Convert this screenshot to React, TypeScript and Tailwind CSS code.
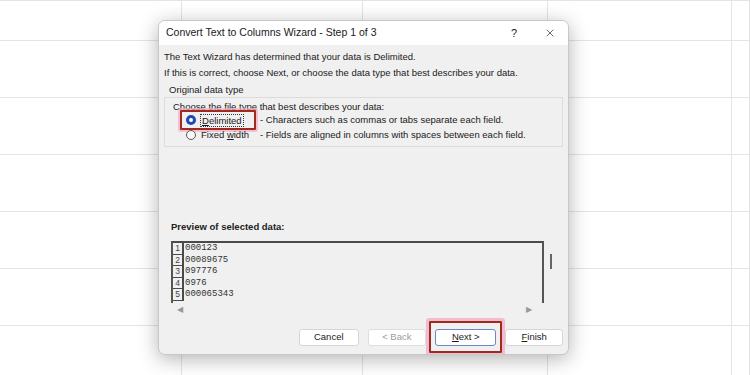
import { X } from "lucide-react";

const rows = ["000123", "00089675", "097776", "0976", "000065343"];

function GridBackground() {
  const cells = [];
  for (let r = 0; r < 7; r++) {
    for (let c = 0; c < 5; c++) {
      cells.push(<div key={`${r}-${c}`} className="border-r border-b border-[#e4e4e4]" />);
    }
  }
  return (
    <div className="grid h-full w-full grid-cols-[182px_181px_185px_184px_18px] grid-rows-[40px_57px_57px_57px_57px_57px_50px] border-t border-[#e4e4e4]">
      {cells}
    </div>
  );
}

function Radio({ checked }: { checked?: boolean }) {
  return checked ? (
    <span className="flex h-[10px] w-[10px] items-center justify-center rounded-full bg-[#1f4bb0]">
      <span className="h-[4px] w-[4px] rounded-full bg-white" />
    </span>
  ) : (
    <span className="h-[10px] w-[10px] rounded-full border border-[#5a5a5a] bg-[#f7f7f7]" />
  );
}

function Btn({ children, className = "" }: { children: React.ReactNode; className?: string }) {
  return (
    <div
      className={`flex h-[17px] items-center justify-center rounded-[3px] border bg-white text-[9.5px] ${className}`}
    >
      {children}
    </div>
  );
}

export default function App() {
  return (
    <div
      className="relative h-[375px] w-[750px] overflow-hidden bg-white text-[#1a1a1a]"
      style={{ fontFamily: '"Liberation Sans", Arial, sans-serif' }}
    >
      <GridBackground />

      {/* Wizard dialog */}
      <div className="absolute left-[158px] top-[20px] flex h-[335px] w-[411px] flex-col overflow-hidden rounded-[7px] border border-[#c8c8c8] bg-[#f0f0f0] shadow-[0_4px_20px_rgba(0,0,0,0.3)]">
        <div className="flex h-[24px] shrink-0 items-center bg-white pl-[7px] pr-[12px] text-[10.5px]">
          <span className="flex-1">Convert Text to Columns Wizard - Step 1 of 3</span>
          <span className="mr-[27px] text-[11px]">?</span>
          <X size={12} strokeWidth={1.3} />
        </div>

        <div className="flex flex-1 flex-col px-[5px] text-[9.5px]">
          <p className="mt-[6px] leading-[12px]">The Text Wizard has determined that your data is Delimited.</p>
          <p className="mt-[4px] leading-[12px]">
            If this is correct, choose Next, or choose the data type that best describes your data.
          </p>
          <p className="mt-[5px] pl-[5px] leading-[12px]">Original data type</p>

          <div className="mt-[1px] h-[50px] border border-[#dcdcdc] pl-[8px] pt-[3px]">
            <p className="leading-[12px]">
              Ch<span className="underline decoration-[#e58aa8]">oose the file typ</span>e that best describes your
              data:
            </p>
            <div className="mt-[-3px] flex items-center">
              <div className="ml-[7px] flex h-[20px] w-[76px] items-center rounded-[1px] border-2 border-[#9e2b1f] pl-[4px] shadow-[0_0_0_2px_rgba(244,170,196,0.7)]">
                <Radio checked />
                <span className="ml-[4px] border border-dotted border-[#333] px-[1px] leading-[11px]">
                  <span className="underline">D</span>elimited
                </span>
              </div>
              <span className="ml-[4px]">- Characters such as commas or tabs separate each field.</span>
            </div>
            <div className="mt-[-2px] flex items-center">
              <div className="ml-[13px] flex items-center">
                <Radio />
                <span className="ml-[5px] w-[53px]">
                  Fixed <span className="underline">w</span>idth
                </span>
              </div>
              <span className="ml-[6px]">- Fields are aligned in columns with spaces between each field.</span>
            </div>
          </div>

          <p className="mt-[74px] pl-[7px] font-bold leading-[12px] text-[#222]">Preview of selected data:</p>

          <div className="mt-[8px] flex items-start pl-[7px]">
            <div className="h-[62px] w-[373px] overflow-hidden border-x-2 border-t-2 border-[#4a4a4a] border-x-[#555] bg-[#f0f0f0]">
              {rows.map((v, i) => (
                <div key={v} className="flex h-[11.6px] items-center">
                  <span className="flex h-full w-[11px] items-center justify-center border-r-2 border-b border-[#4a4a4a] text-[8.5px] text-[#444]">
                    {i + 1}
                  </span>
                  <span
                    className="pl-[1px] text-[9px] text-[#333]"
                    style={{ fontFamily: '"Liberation Mono", "Courier New", monospace' }}
                  >
                    {v}
                  </span>
                </div>
              ))}
            </div>
            <div className="ml-[6px] mt-[13px] h-[15px] w-[2px] bg-[#666]" />
          </div>

          <div className="mt-[2px] flex h-[10px] items-center justify-between pl-[13px] pr-[31px] text-[8px] leading-[10px] text-[#999]">
            <span>◀</span>
            <span>▶</span>
          </div>

          <div className="mt-[6px] flex items-center">
            <Btn className="ml-[135px] w-[60px] border-[#d6d6d6]">Cancel</Btn>
            <Btn className="ml-[9px] w-[59px] border-[#dedede] text-[#9c9c9c]">&lt; Back</Btn>
            <div className="ml-[3px] flex h-[32px] w-[74px] items-center justify-center rounded-[1px] border-2 border-[#9e2b1f] shadow-[0_0_0_3px_rgba(244,170,196,0.75)]">
              <Btn className="w-[61px] border-[#6d87c6] bg-[#fdfdff]">
                <span className="underline">N</span>ext &gt;
              </Btn>
            </div>
            <Btn className="ml-[3px] w-[58px] border-[#d6d6d6]">
              <span className="underline">F</span>inish
            </Btn>
          </div>
        </div>
      </div>
    </div>
  );
}
